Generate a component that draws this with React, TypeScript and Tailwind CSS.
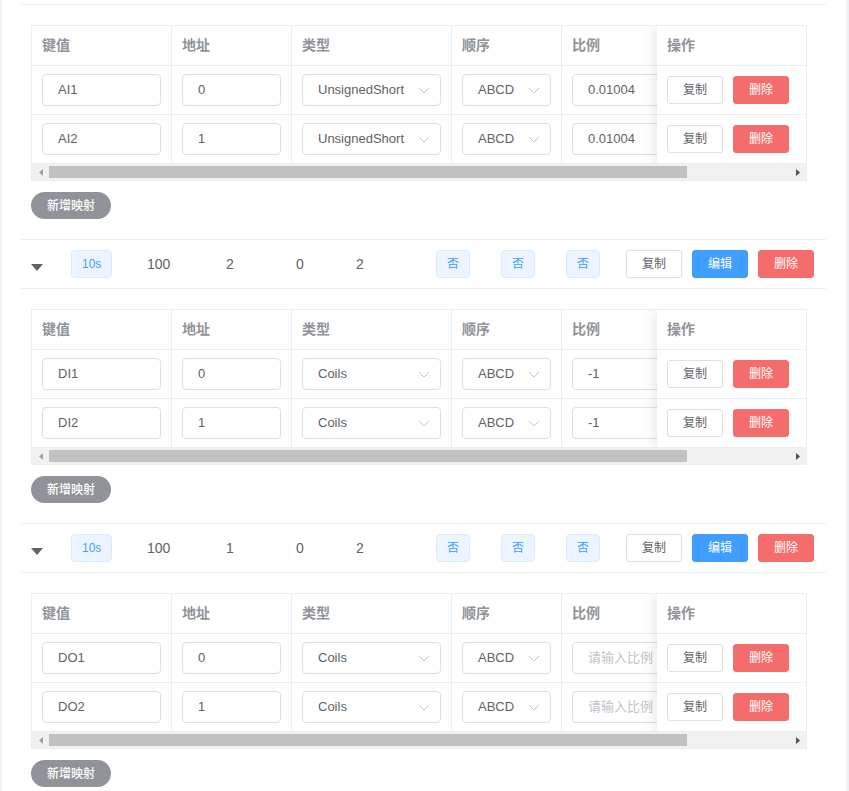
import { ReactNode } from "react";

interface MapRow {
  key: string;
  addr: string;
  type: string;
  order: string;
  ratio: string;
}

interface Group {
  rows: MapRow[];
}

const groups: Group[] = [
  {
    rows: [
      { key: "AI1", addr: "0", type: "UnsignedShort", order: "ABCD", ratio: "0.01004" },
      { key: "AI2", addr: "1", type: "UnsignedShort", order: "ABCD", ratio: "0.01004" },
    ],
  },
  {
    rows: [
      { key: "DI1", addr: "0", type: "Coils", order: "ABCD", ratio: "-1" },
      { key: "DI2", addr: "1", type: "Coils", order: "ABCD", ratio: "-1" },
    ],
  },
  {
    rows: [
      { key: "DO1", addr: "0", type: "Coils", order: "ABCD", ratio: "" },
      { key: "DO2", addr: "1", type: "Coils", order: "ABCD", ratio: "" },
    ],
  },
];

const summaries = [
  { total: "100", a: "2", b: "0", c: "2" },
  { total: "100", a: "1", b: "0", c: "2" },
];

function Chevron() {
  return (
    <svg width="12" height="7" viewBox="0 0 12 7" fill="none">
      <polyline points="1,1 6,6 11,1" stroke="#c0c4cc" strokeWidth="1" />
    </svg>
  );
}

function Input({ value, placeholder }: { value: string; placeholder?: string }) {
  return (
    <div className="h-[32px] w-full rounded-[4px] border border-[#dcdfe6] bg-white px-[15px] flex items-center">
      <span className={`block overflow-hidden whitespace-nowrap text-[13px] ${value ? "text-[#606266]" : "text-[#c0c4cc]"}`}>
        {value || placeholder}
      </span>
    </div>
  );
}

function Select({ value }: { value: string }) {
  return (
    <div className="h-[32px] w-full rounded-[4px] border border-[#dcdfe6] bg-white pl-[15px] pr-[10px] flex items-center justify-between">
      <span className="text-[13px] text-[#606266] whitespace-nowrap">{value}</span>
      <Chevron />
    </div>
  );
}

function Cell({ w, children }: { w: string; children?: ReactNode }) {
  return <div className={`${w} shrink-0 border-r border-[#ebeef5] px-[10px] flex items-center`}>{children}</div>;
}

function SmallButton({ kind, children }: { kind: "plain" | "primary" | "danger"; children: ReactNode }) {
  const cls =
    kind === "primary"
      ? "bg-[#409eff] border-[#409eff] text-white"
      : kind === "danger"
        ? "bg-[#f56c6c] border-[#f56c6c] text-white"
        : "bg-white border-[#dcdfe6] text-[#606266]";
  return (
    <button className={`h-[28px] w-[56px] shrink-0 rounded-[3px] border text-[12px] flex items-center justify-center ${cls}`}>
      {children}
    </button>
  );
}

function MapTable({ rows }: { rows: MapRow[] }) {
  return (
    <div className="ml-[10px] w-[776px] border border-[#ebeef5]">
      <div className="relative overflow-hidden">
        {/* scrolling body, last column sits under the fixed one */}
        <div className="w-[910px]">
          <div className="h-[40px] flex border-b border-[#ebeef5] text-[14px] font-bold text-[#909399]">
            <Cell w="w-[140px]">键值</Cell>
            <Cell w="w-[120px]">地址</Cell>
            <Cell w="w-[160px]">类型</Cell>
            <Cell w="w-[110px]">顺序</Cell>
            <Cell w="w-[120px]">比例</Cell>
            <Cell w="w-[260px]" />
          </div>
          {rows.map((r) => (
            <div key={r.key} className="h-[49px] flex border-b border-[#ebeef5]">
              <Cell w="w-[140px]">
                <Input value={r.key} />
              </Cell>
              <Cell w="w-[120px]">
                <Input value={r.addr} />
              </Cell>
              <Cell w="w-[160px]">
                <Select value={r.type} />
              </Cell>
              <Cell w="w-[110px]">
                <Select value={r.order} />
              </Cell>
              <Cell w="w-[120px]">
                <Input value={r.ratio} placeholder="请输入比例" />
              </Cell>
              <Cell w="w-[260px]" />
            </div>
          ))}
        </div>

        {/* fixed right column */}
        <div className="absolute right-0 top-0 w-[149px] bg-white shadow-[-5px_0_10px_rgba(0,0,0,0.07)]">
          <div className="h-[40px] border-b border-[#ebeef5] px-[10px] flex items-center text-[14px] font-bold text-[#909399]">
            操作
          </div>
          {rows.map((r) => (
            <div key={r.key} className="h-[49px] border-b border-[#ebeef5] px-[10px] flex items-center gap-[10px]">
              <SmallButton kind="plain">复制</SmallButton>
              <SmallButton kind="danger">删除</SmallButton>
            </div>
          ))}
        </div>
      </div>

      {/* horizontal scrollbar */}
      <div className="h-[16px] bg-[#f1f1f1] flex items-center">
        <div className="w-[17px] flex justify-center">
          <svg width="4" height="7" viewBox="0 0 4 7">
            <polygon points="4,0 0,3.5 4,7" fill="#a3a3a3" />
          </svg>
        </div>
        <div className="h-[12px] w-[638px] bg-[#c1c1c1]" />
        <div className="flex-1" />
        <div className="w-[17px] flex justify-center">
          <svg width="4" height="7" viewBox="0 0 4 7">
            <polygon points="0,0 4,3.5 0,7" fill="#505050" />
          </svg>
        </div>
      </div>
    </div>
  );
}

function Tag({ children }: { children: ReactNode }) {
  return (
    <span className="h-[28px] px-[10px] rounded-[4px] border border-[#d9ecff] bg-[#ecf5ff] text-[12px] text-[#409eff] inline-flex items-center">
      {children}
    </span>
  );
}

function SummaryRow({ total, a, b, c }: { total: string; a: string; b: string; c: string }) {
  return (
    <div className="h-[49px] border-b border-[#ebeef5] px-[10px] flex items-center text-[14px] text-[#606266]">
      <div className="w-[40px] shrink-0 pt-[6px]">
        <svg width="12" height="7" viewBox="0 0 12 7">
          <polygon points="0,0 12,0 6,7" fill="#606266" />
        </svg>
      </div>
      <div className="w-[76px] shrink-0">
        <Tag>10s</Tag>
      </div>
      <div className="w-[79px] shrink-0">{total}</div>
      <div className="w-[70px] shrink-0">{a}</div>
      <div className="w-[60px] shrink-0">{b}</div>
      <div className="w-[80px] shrink-0">{c}</div>
      <div className="w-[65px] shrink-0">
        <Tag>否</Tag>
      </div>
      <div className="w-[65px] shrink-0">
        <Tag>否</Tag>
      </div>
      <div className="w-[60px] shrink-0">
        <Tag>否</Tag>
      </div>
      <div className="flex gap-[10px]">
        <SmallButton kind="plain">复制</SmallButton>
        <SmallButton kind="primary">编辑</SmallButton>
        <SmallButton kind="danger">删除</SmallButton>
      </div>
    </div>
  );
}

export default function App() {
  return (
    <div
      className="h-[791px] w-[849px] overflow-hidden bg-[#eef0f6] pl-[2px] pr-[3px]"
      style={{ fontFamily: '"Liberation Sans", "Noto Sans CJK SC", sans-serif' }}
    >
      <div className="h-full bg-white pl-[19px] pr-[20px] overflow-hidden">
        {/* bottom edge of the previous summary row, the rest is scrolled away */}
        <div className="h-[5px] border-b border-[#ebeef5]" />
        {groups.map((g, i) => (
          <div key={i}>
            <div className="pt-[20px] pb-[20px] border-b border-[#ebeef5]">
              <MapTable rows={g.rows} />
              <button className="block mt-[11px] ml-[10px] h-[27px] w-[80px] rounded-full bg-[#909399] text-[12px] font-medium text-white">
                新增映射
              </button>
            </div>
            {summaries[i] && <SummaryRow {...summaries[i]} />}
          </div>
        ))}
      </div>
    </div>
  );
}
